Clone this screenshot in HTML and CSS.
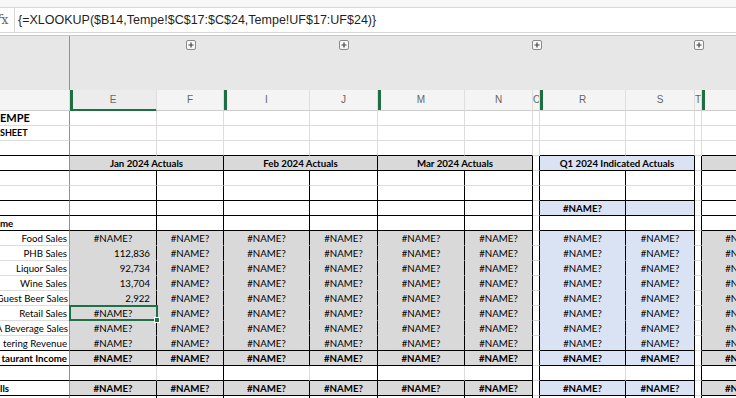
FILE: index.html
```html
<!DOCTYPE html>
<html lang="en">
<head>
    <meta charset="UTF-8">
    <title>Tempe Sheet</title>
    <link rel="stylesheet" href="styles.css">
</head>
<body>
    <div class="topstrip"></div>
    <div class="fbar">
        <div class="fx"><i>f</i>x</div>
        <div class="formula">{=XLOOKUP($B14,Tempe!$C$17:$C$24,Tempe!UF$17:UF$24)}</div>
    </div>
    <div class="sheet">
        <table class="grid">
            <colgroup>
                <col style="width:70px"><col style="width:87px"><col style="width:67px">
                <col style="width:86px"><col style="width:68px"><col style="width:87px">
                <col style="width:68px"><col style="width:7px"><col style="width:86px">
                <col style="width:69px"><col style="width:7px"><col style="width:86px">
            </colgroup>
            <tr class="grp">
                <td></td><td></td>
                <td><div class="pl"><svg width="10" height="10" viewBox="0 0 10 10"><rect x="0.5" y="0.5" width="9" height="9" rx="1.5" fill="#f7f7f7" stroke="#8a8a8a"/><path d="M5 2.5v5M2.5 5h5" stroke="#444" stroke-width="1.2"/></svg></div></td>
                <td></td>
                <td><div class="pl"><svg width="10" height="10" viewBox="0 0 10 10"><rect x="0.5" y="0.5" width="9" height="9" rx="1.5" fill="#f7f7f7" stroke="#8a8a8a"/><path d="M5 2.5v5M2.5 5h5" stroke="#444" stroke-width="1.2"/></svg></div></td>
                <td></td><td></td>
                <td><div class="pl"><svg width="10" height="10" viewBox="0 0 10 10"><rect x="0.5" y="0.5" width="9" height="9" rx="1.5" fill="#f7f7f7" stroke="#8a8a8a"/><path d="M5 2.5v5M2.5 5h5" stroke="#444" stroke-width="1.2"/></svg></div></td>
                <td></td><td></td>
                <td><div class="pl"><svg width="10" height="10" viewBox="0 0 10 10"><rect x="0.5" y="0.5" width="9" height="9" rx="1.5" fill="#f7f7f7" stroke="#8a8a8a"/><path d="M5 2.5v5M2.5 5h5" stroke="#444" stroke-width="1.2"/></svg></div></td>
                <td></td>
            </tr>
            <tr class="hdr">
                <td></td>
                <td class="hid cur">E</td>
                <td>F</td>
                <td class="hid">I</td>
                <td>J</td>
                <td class="hid">M</td>
                <td>N</td>
                <td class="narrow">O</td>
                <td class="hid">R</td>
                <td>S</td>
                <td class="narrow">T</td>
                <td class="hid"></td>
            </tr>
            <tr>
                <td class="title">EMPE</td>
                <td></td><td></td><td></td><td></td><td></td><td></td><td class="gap"></td><td></td><td></td><td class="gap"></td><td></td>
            </tr>
            <tr>
                <td class="sub small">SHEET</td>
                <td></td><td></td><td></td><td></td><td></td><td></td><td class="gap"></td><td></td><td></td><td class="gap"></td><td></td>
            </tr>
            <tr class="hb">
                <td></td>
                <td></td><td></td><td></td><td></td><td></td><td></td><td class="gap"></td><td></td><td></td><td class="gap"></td><td></td>
            </tr>
            <tr class="hb">
                <td></td>
                <td colspan="2" class="g c k bold">Jan 2024 Actuals</td>
                <td colspan="2" class="g c k bold">Feb 2024 Actuals</td>
                <td colspan="2" class="g c k bold">Mar 2024 Actuals</td>
                <td class="gap k"></td>
                <td colspan="2" class="b c k bold">Q1 2024 Indicated Actuals</td>
                <td class="gap k"></td>
                <td class="g k"></td>
            </tr>
            <tr>
                <td></td>
                <td class="k"></td><td class="k"></td><td class="k"></td><td class="k"></td><td class="k"></td><td class="k"></td><td class="gap k"></td><td class="k"></td><td class="k"></td><td class="gap k"></td><td class="k"></td>
            </tr>
            <tr class="hb">
                <td></td>
                <td class="k"></td><td class="k"></td><td class="k"></td><td class="k"></td><td class="k"></td><td class="k"></td><td class="gap k"></td><td class="k"></td><td class="k"></td><td class="gap k"></td><td class="k"></td>
            </tr>
            <tr class="hb">
                <td></td>
                <td class="k"></td><td class="k"></td><td class="k"></td><td class="k"></td><td class="k"></td><td class="k"></td><td class="gap k"></td><td class="b c k bold">#NAME?</td><td class="b k"></td><td class="gap k"></td><td class="k"></td>
            </tr>
            <tr class="hb">
                <td class="sub">me</td>
                <td class="k"></td><td class="k"></td><td class="k"></td><td class="k"></td><td class="k"></td><td class="k"></td><td class="gap k"></td><td class="k"></td><td class="k"></td><td class="gap k"></td><td class="k"></td>
            </tr>
            <tr class="d">
                <td class="lbl">Food Sales</td>
                <td class="g c k">#NAME?</td><td class="g c k">#NAME?</td><td class="g c k">#NAME?</td><td class="g c k">#NAME?</td><td class="g c k">#NAME?</td><td class="g c k">#NAME?</td>
                <td class="gap k"></td><td class="b c k">#NAME?</td><td class="b c k">#NAME?</td><td class="gap k"></td><td class="g c k">#NAME?</td>
            </tr>
            <tr class="d">
                <td class="lbl">PHB Sales</td>
                <td class="g r k">112,836</td><td class="g c k">#NAME?</td><td class="g c k">#NAME?</td><td class="g c k">#NAME?</td><td class="g c k">#NAME?</td><td class="g c k">#NAME?</td>
                <td class="gap k"></td><td class="b c k">#NAME?</td><td class="b c k">#NAME?</td><td class="gap k"></td><td class="g c k">#NAME?</td>
            </tr>
            <tr class="d">
                <td class="lbl">Liquor Sales</td>
                <td class="g r k">92,734</td><td class="g c k">#NAME?</td><td class="g c k">#NAME?</td><td class="g c k">#NAME?</td><td class="g c k">#NAME?</td><td class="g c k">#NAME?</td>
                <td class="gap k"></td><td class="b c k">#NAME?</td><td class="b c k">#NAME?</td><td class="gap k"></td><td class="g c k">#NAME?</td>
            </tr>
            <tr class="d">
                <td class="lbl">Wine Sales</td>
                <td class="g r k">13,704</td><td class="g c k">#NAME?</td><td class="g c k">#NAME?</td><td class="g c k">#NAME?</td><td class="g c k">#NAME?</td><td class="g c k">#NAME?</td>
                <td class="gap k"></td><td class="b c k">#NAME?</td><td class="b c k">#NAME?</td><td class="gap k"></td><td class="g c k">#NAME?</td>
            </tr>
            <tr class="d">
                <td class="lbl">Guest Beer Sales</td>
                <td class="g r k">2,922</td><td class="g c k">#NAME?</td><td class="g c k">#NAME?</td><td class="g c k">#NAME?</td><td class="g c k">#NAME?</td><td class="g c k">#NAME?</td>
                <td class="gap k"></td><td class="b c k">#NAME?</td><td class="b c k">#NAME?</td><td class="gap k"></td><td class="g c k">#NAME?</td>
            </tr>
            <tr class="d">
                <td class="lbl">Retail Sales</td>
                <td class="g c k sel">#NAME?</td><td class="g c k">#NAME?</td><td class="g c k">#NAME?</td><td class="g c k">#NAME?</td><td class="g c k">#NAME?</td><td class="g c k">#NAME?</td>
                <td class="gap k"></td><td class="b c k">#NAME?</td><td class="b c k">#NAME?</td><td class="gap k"></td><td class="g c k">#NAME?</td>
            </tr>
            <tr class="d">
                <td class="lbl">A Beverage Sales</td>
                <td class="g c k">#NAME?</td><td class="g c k">#NAME?</td><td class="g c k">#NAME?</td><td class="g c k">#NAME?</td><td class="g c k">#NAME?</td><td class="g c k">#NAME?</td>
                <td class="gap k"></td><td class="b c k">#NAME?</td><td class="b c k">#NAME?</td><td class="gap k"></td><td class="g c k">#NAME?</td>
            </tr>
            <tr class="hb">
                <td class="lbl">tering Revenue</td>
                <td class="g c k">#NAME?</td><td class="g c k">#NAME?</td><td class="g c k">#NAME?</td><td class="g c k">#NAME?</td><td class="g c k">#NAME?</td><td class="g c k">#NAME?</td>
                <td class="gap k"></td><td class="b c k">#NAME?</td><td class="b c k">#NAME?</td><td class="gap k"></td><td class="g c k">#NAME?</td>
            </tr>
            <tr class="hb">
                <td class="lbl bold">taurant Income</td>
                <td class="g c k bold">#NAME?</td><td class="g c k bold">#NAME?</td><td class="g c k bold">#NAME?</td><td class="g c k bold">#NAME?</td><td class="g c k bold">#NAME?</td><td class="g c k bold">#NAME?</td>
                <td class="gap k"></td><td class="b c k bold">#NAME?</td><td class="b c k bold">#NAME?</td><td class="gap k"></td><td class="g c k bold">#NAME?</td>
            </tr>
            <tr class="hb">
                <td></td>
                <td></td><td class="k"></td><td></td><td class="k"></td><td></td><td class="k"></td><td class="gap k"></td><td></td><td class="k"></td><td class="gap k"></td><td></td>
            </tr>
            <tr class="hb">
                <td class="sub">lls</td>
                <td class="g c k bold">#NAME?</td><td class="g c k bold">#NAME?</td><td class="g c k bold">#NAME?</td><td class="g c k bold">#NAME?</td><td class="g c k bold">#NAME?</td><td class="g c k bold">#NAME?</td>
                <td class="gap k"></td><td class="b c k bold">#NAME?</td><td class="b c k bold">#NAME?</td><td class="gap k"></td><td class="g c k bold">#NAME?</td>
            </tr>
            <tr>
                <td></td>
                <td class="k"></td><td class="k"></td><td class="k"></td><td class="k"></td><td class="k"></td><td class="k"></td><td class="gap k"></td><td class="k"></td><td class="k"></td><td class="gap k"></td><td class="k"></td>
            </tr>
        </table>
    </div>
</body>
</html>
```

FILE: styles.css
```css
body {
    margin: 0;
    width: 736px;
    height: 398px;
    overflow: hidden;
    background-color: #fff;
    font-family: Lato, "Liberation Sans", sans-serif;
}
.topstrip {
    height: 7px;
    background-color: #f7f7f7;
}
.fbar {
    display: flex;
    height: 24px;
    border-top: 1px solid #d8d8d8;
    border-bottom: 1px solid #d8d8d8;
    margin-bottom: 2px;
}
.fx {
    width: 17px;
    margin-left: -3px;
    font-family: "DejaVu Serif", serif;
    font-size: 12px;
    line-height: 24px;
    color: #666;
}
.formula {
    flex: 1;
    border-left: 1px solid #d8d8d8;
    padding-left: 3px;
    font-family: "Liberation Sans", sans-serif;
    font-size: 12.5px;
    line-height: 24px;
    color: #1f1f1f;
    white-space: nowrap;
}
.sheet {
    border-top: 1px solid #c9c9c9;
}
.grid {
    border-collapse: separate;
    border-spacing: 0;
    table-layout: fixed;
    width: 788px;
}
.grid tr {
    height: 15px;
}
.grid td {
    padding: 0 3px;
    border-right: 1px solid #dcdcdc;
    border-bottom: 1px solid #dcdcdc;
    line-height: 14px;
    font-size: 9.7px;
    color: #000;
    white-space: nowrap;
    overflow: hidden;
}
.grid td:first-child {
    border-right-color: #929292;
    padding: 0;
}

/* group outline bar */
.grid tr.grp {
    height: 54px;
    background-color: #e7e7e7;
}
.grid tr.grp td {
    border-right: 0;
    border-bottom: 0;
    padding: 4px 0 0;
    vertical-align: top;
    overflow: visible;
}
.grid tr.grp td:first-child {
    border-right: 1px solid #929292;
}
.pl {
    display: flex;
    justify-content: center;
}
.pl svg {
    display: block;
    flex-shrink: 0;
}

/* column letters */
.grid tr.hdr {
    height: 21px;
}
.grid tr.hdr td {
    background-color: #f4f4f4;
    border-right-color: #dedede;
    border-bottom-color: #cdcdcd;
    font-family: "Liberation Sans", sans-serif;
    font-size: 10px;
    line-height: 20px;
    color: #666;
    text-align: center;
}
.grid tr.hdr td.narrow {
    padding: 0;
    text-align: left;
}
.grid tr.hdr td.hid {
    box-shadow: inset 3px 0 0 #1e6f43;
}
.grid tr.hdr td.cur {
    background-color: #ececec;
    border-bottom-color: #1e6f43;
    box-shadow: inset 3px 0 0 #1e6f43, inset 0 -1px 0 #1e6f43;
}

/* cells */
.grid td.title {
    font-size: 11px;
    font-weight: 700;
}
.sub {
    font-weight: 700;
}
.grid td.small {
    font-size: 9px;
}
.grid td.lbl {
    direction: rtl;
    text-align: right;
    padding-right: 2px;
}
.bold {
    font-weight: 700;
}
.c {
    text-align: center;
}
.grid td.r {
    text-align: right;
    padding-right: 6px;
}
.g {
    background-color: #d9d9d9;
}
.b {
    background-color: #dae3f3;
}
.grid td.gap {
    padding: 0;
}
.grid td.k {
    border-right-color: #000;
}
.grid tr.hb td {
    border-bottom-color: #000;
}
.grid tr.hb td.gap {
    border-bottom-color: #dcdcdc;
}
.grid tr.d td.g,
.grid tr.d td.b {
    border-bottom-color: transparent;
}
.grid td.sel {
    position: relative;
    overflow: visible;
}
.sel::before {
    content: "";
    position: absolute;
    left: -1px;
    top: -1px;
    right: -2px;
    bottom: -1px;
    border: 2px solid #1e7145;
}
.sel::after {
    content: "";
    position: absolute;
    right: -4px;
    bottom: -3px;
    width: 4px;
    height: 4px;
    background-color: #1e7145;
    border: 1px solid #fff;
}
```
